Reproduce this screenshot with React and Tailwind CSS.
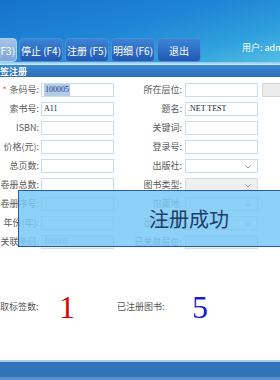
import React from "react";

const Chevron = () => (
  <svg width="6" height="4" viewBox="0 0 6 4" className="absolute right-[6px] top-[5px]">
    <path d="M0.5 0.5 L3 3 L5.5 0.5" fill="none" stroke="#999" strokeWidth="1" />
  </svg>
);

function Label({ w, children, star }) {
  return (
    <div className={`${w} shrink-0 h-[14px] flex items-center justify-end whitespace-nowrap text-[9px] text-[#5a5a5a]`}>
      {star && <span className="text-[#e03030] mr-[3px] text-[8px]">*</span>}
      {children}
    </div>
  );
}

function Input({ value, sel, disabled, select, grey }) {
  return (
    <div
      className={`relative w-[73px] h-[14px] shrink-0 border ${grey ? "border-[#d4dde6] bg-[#efefef]" : "border-[#c8dcee] bg-white"} flex items-center pl-[2px] font-['Liberation_Serif',serif] text-[8px] ${disabled ? "text-[#888]" : "text-[#222]"} whitespace-nowrap overflow-hidden`}
    >
      {sel ? <span className="bg-[#b4cbe9] text-[#1d3e8a] px-[1px]">{value}</span> : value}
      {select && <Chevron />}
    </div>
  );
}

function Row({ l, r }) {
  return (
    <div className="h-[19px] flex items-start">
      <Label w="w-[39px]" star={l.star}>{l.label}</Label>
      <div className="w-[2px] shrink-0" />
      <Input {...l} />
      <Label w="w-[68px]">{r.label}</Label>
      <div className="w-[3px] shrink-0" />
      <Input {...r} />
      {r.extra && <div className="ml-[4px] w-[30px] h-[14px] shrink-0 border border-[#d6d6d6] bg-[#ececec]" />}
    </div>
  );
}

const rows = [
  [{ label: "条码号:", star: true, value: "100005", sel: true }, { label: "所在层位:", extra: true }],
  [{ label: "索书号:", value: "A11" }, { label: "题名:", value: ".NET TEST" }],
  [{ label: "ISBN:" }, { label: "关键词:" }],
  [{ label: "价格(元):" }, { label: "登录号:" }],
  [{ label: "总页数:" }, { label: "出版社:", select: true }],
  [{ label: "卷册总数:" }, { label: "图书类型:", select: true, grey: true }],
  [{ label: "卷册序号:" }, { label: "馆藏地:", select: true }],
  [{ label: "年份(年):" }, { label: "出版时间:", select: true }],
  [{ label: "关联条码:", value: "100005", disabled: true, grey: true }, { label: "已关联层位:", grey: true }],
];

function Btn({ children, first }) {
  return (
    <div
      className={`h-[24px] w-[44px] shrink-0 rounded-[4px] flex items-center justify-center text-white text-[10px] whitespace-nowrap ${
        first
          ? "-ml-[27px] bg-[linear-gradient(180deg,#a4c4e6,#7ea6d6)] border border-[#b5d0ec]"
          : "bg-[linear-gradient(180deg,#3b84d6,#2158b2)] border border-[#4a8ed8]"
      }`}
    >
      {children}
    </div>
  );
}

export default function App() {
  return (
    <div className="w-[280px] h-[380px] overflow-hidden relative bg-white flex flex-col font-['Noto_Sans_CJK_SC','Noto_Sans',sans-serif]">
      <div className="h-[62px] shrink-0 bg-[linear-gradient(165deg,#1672cc_0%,#1f86d6_45%,#2e9fdc_75%,#55bde6_100%)] flex items-end">
        <div className="flex items-end gap-[2px] h-[24px]">
          <Btn first>读取 (F3)</Btn>
          <Btn>停止 (F4)</Btn>
          <Btn>注册 (F5)</Btn>
          <Btn>明细 (F6)</Btn>
          <Btn>退出</Btn>
        </div>
        <div className="ml-[41px] mb-[8px] text-[9px] text-white whitespace-nowrap">用户: admin</div>
      </div>
      <div className="h-[3px] shrink-0 bg-[linear-gradient(180deg,#7fc6ec,#d4eef9)]" />
      <div className="h-[12px] shrink-0 bg-[linear-gradient(180deg,#3c8bd0,#2a6db6)] flex items-center text-white text-[9px] font-bold leading-none">
        签注册
      </div>
      <div className="pt-[6px]">
        {rows.map(([l, r], i) => (
          <Row key={i} l={l} r={r} />
        ))}
      </div>
      <div className="mt-[41px] h-[24px] flex items-center whitespace-nowrap">
        <span className="w-[59px] shrink-0 text-[9px] text-[#555]">取标签数:</span>
        <span className="w-[58px] shrink-0 font-['Liberation_Serif',serif] text-[32px] leading-none text-[#e00000]">1</span>
        <span className="w-[75px] shrink-0 text-[9px] text-[#555]">已注册图书:</span>
        <span className="font-['Liberation_Serif',serif] text-[32px] leading-none text-[#1c1cd4]">5</span>
      </div>
      <div className="flex-1" />
      <div className="h-[20px] shrink-0 flex flex-col">
        <div className="h-[2px] bg-[#a9cbe8]" />
        <div className="h-[15px] bg-[#3173b8]" />
        <div className="h-[3px] bg-[#5b90cc]" />
      </div>
      <div className="absolute left-[18px] top-[190px] w-[342px] h-[57px] border border-[#2a5aa6] bg-[rgba(122,200,247,0.86)] flex items-center justify-center">
        <span className="text-[20px] text-[#1d3c66] leading-none">注册成功</span>
      </div>
    </div>
  );
}
